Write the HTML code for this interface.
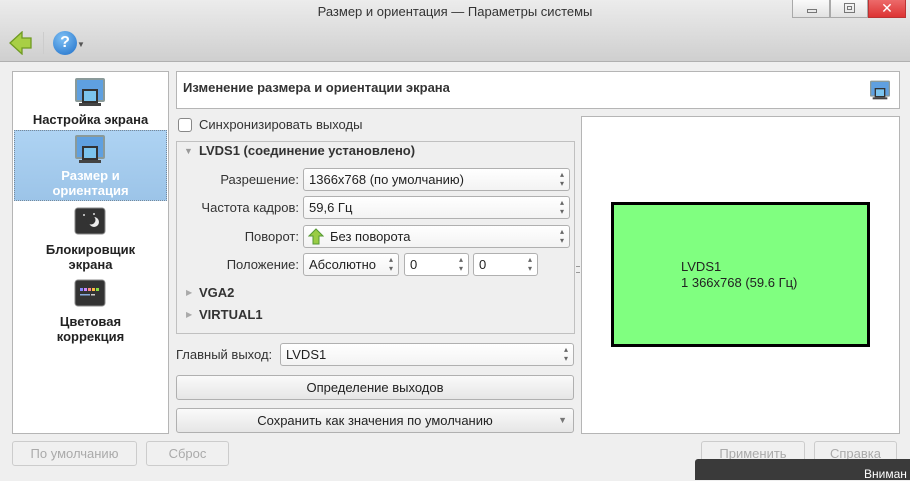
<!DOCTYPE html><html><head><meta charset="utf-8"><style>
*{box-sizing:border-box;margin:0;padding:0}
body{width:910px;height:480px;overflow:hidden;background:#efefef;font-family:"Liberation Sans","DejaVu Sans",sans-serif;font-size:13px;color:#222;position:relative}
.a{position:absolute}
.tb{left:0;top:0;width:910px;height:62px;background:linear-gradient(#ececec,#cfcfcf);border-bottom:1px solid #b0b0b0}
.wb{top:0;height:18px;border:1px solid #a9a9a9;border-top:none;background:linear-gradient(#fafafa,#e2e2e2)}
.box{background:#fff;border:1px solid #b5b5b5}
.combo{background:linear-gradient(#fff,#f3f3f3);border:1px solid #b0b0b0;border-radius:3px;height:23px;line-height:21px;padding-left:5px;font-size:13px}
.combo:after{content:"▴\A▾";white-space:pre;position:absolute;right:5px;top:1px;font-size:8px;line-height:9px;color:#666}
.btn{background:linear-gradient(#fafafa,#e6e6e6);border:1px solid #b0b0b0;border-radius:3px;text-align:center;height:25px;line-height:23px}
.dis{color:#aaa;border-color:#ccc;background:#f0f0f0}
.lbl{text-align:right;width:120px;color:#333}
.bold{font-weight:bold}
</style></head><body>
<div class="a tb"></div>
<div class="a" style="left:0;width:910px;top:4px;text-align:center;font-size:13px;color:#333">Размер и ориентация — Параметры системы</div>
<div class="a wb" style="left:792px;width:38px"><div class="a" style="left:14px;top:9px;width:10px;height:4px;border:1px solid #777"></div></div>
<div class="a wb" style="left:830px;width:38px"><div class="a" style="left:13px;top:3px;width:11px;height:10px;border:1px solid #777"></div><div class="a" style="left:16px;top:6px;width:5px;height:4px;border:1px solid #777"></div></div>
<div class="a wb" style="left:868px;width:38px;background:linear-gradient(#ec6a6a,#d33);border-color:#b33;color:#fff;text-align:center;font-weight:bold;font-size:14px;line-height:16px">✕</div>
<svg class="a" style="left:9px;top:31px" width="24" height="24"><path d="M1 12 L13 1 V7 H22 V17 H13 V23Z" fill="#a8cf45" stroke="#6f9a22" stroke-width="1.3"/></svg>
<div class="a" style="left:43px;top:32px;width:1px;height:22px;background:#ccc"></div>
<div class="a" style="left:53px;top:31px;width:24px;height:24px;border-radius:50%;background:radial-gradient(circle at 40% 30%,#7ec0f5,#1f6fc8);color:#fff;font-weight:bold;text-align:center;line-height:24px;font-size:16px">?</div>
<div class="a" style="left:77px;top:40px;font-size:8px;color:#555">▼</div>

<div class="a box" style="left:12px;top:71px;width:157px;height:363px"></div>
<div class="a" style="left:14px;top:130px;width:153px;height:71px;background:linear-gradient(#aed3f3,#9cc4e8);border:1px dotted #789"></div>
<svg class="a" width="0" height="0"><defs><g id="m"><rect x="1" y="1" width="30" height="24" fill="#8a9a9a" rx="2"/><rect x="3" y="3" width="26" height="20" fill="#5fa0e0"/><rect x="8" y="12" width="16" height="14" fill="#333"/><rect x="10" y="14" width="12" height="10" fill="#7bc4ee"/><rect x="5" y="26" width="22" height="3" fill="#444"/></g></defs></svg>
<svg class="a" style="left:74px;top:77px" width="32" height="30"><use href="#m"/></svg>
<div class="a bold" style="left:14px;width:153px;text-align:center;top:112px">Настройка экрана</div>
<svg class="a" style="left:74px;top:134px" width="32" height="30"><use href="#m"/></svg>
<div class="a bold" style="left:14px;width:153px;text-align:center;top:168px;color:#fff;line-height:15px">Размер и<br>ориентация</div>
<svg class="a" style="left:74px;top:207px" width="32" height="28"><rect x="1" y="1" width="30" height="26" rx="3" fill="#333" stroke="#888"/><circle cx="10" cy="8" r="1" fill="#ddd"/><circle cx="14" cy="14" r="1" fill="#ddd"/><circle cx="20" cy="7" r="1" fill="#ddd"/><circle cx="20" cy="15" r="5" fill="#eee"/><circle cx="17" cy="13" r="4.5" fill="#333"/></svg>
<div class="a bold" style="left:14px;width:153px;text-align:center;top:242px;line-height:15px">Блокировщик<br>экрана</div>
<svg class="a" style="left:74px;top:279px" width="32" height="28"><rect x="1" y="1" width="30" height="26" rx="3" fill="#333" stroke="#888"/><rect x="6" y="9" width="3" height="3" fill="#88f"/><rect x="10" y="9" width="3" height="3" fill="#c8f"/><rect x="14" y="9" width="3" height="3" fill="#f88"/><rect x="18" y="9" width="3" height="3" fill="#fb4"/><rect x="22" y="9" width="3" height="3" fill="#8d4"/><rect x="6" y="15" width="10" height="1.5" fill="#8ad"/><rect x="17" y="15" width="4" height="1.5" fill="#ccc"/></svg>
<div class="a bold" style="left:14px;width:153px;text-align:center;top:314px;line-height:15px">Цветовая<br>коррекция</div>

<div class="a box" style="left:176px;top:71px;width:724px;height:38px"></div>
<div class="a bold" style="left:183px;top:80px;color:#333">Изменение размера и ориентации экрана</div>
<svg class="a" style="left:869px;top:80px" width="22" height="20" viewBox="0 0 32 30"><use href="#m"/></svg>

<div class="a" style="left:178px;top:118px;width:14px;height:14px;border:1px solid #888;border-radius:3px;background:#fff"></div>
<div class="a" style="left:199px;top:117px;color:#333">Синхронизировать выходы</div>

<div class="a" style="left:176px;top:141px;width:399px;height:193px;border:1px solid #c0c0c0"></div>
<div class="a" style="left:184px;top:146px;font-size:9px;color:#999">▼</div>
<div class="a bold" style="left:199px;top:143px;color:#333">LVDS1 (соединение установлено)</div>
<div class="a lbl" style="left:179px;top:172px">Разрешение:</div>
<div class="a combo" style="left:303px;top:168px;width:267px">1366x768 (по умолчанию)</div>
<div class="a lbl" style="left:179px;top:200px">Частота кадров:</div>
<div class="a combo" style="left:303px;top:196px;width:267px">59,6 Гц</div>
<div class="a lbl" style="left:179px;top:229px">Поворот:</div>
<div class="a combo" style="left:303px;top:225px;width:267px;padding-left:26px">Без поворота</div>
<svg class="a" style="left:308px;top:228px" width="16" height="17"><path d="M8 1 L15 8 H11 V16 H5 V8 H1Z" fill="#9c4" stroke="#593" stroke-width="1"/></svg>
<div class="a lbl" style="left:179px;top:257px">Положение:</div>
<div class="a combo" style="left:303px;top:253px;width:96px">Абсолютно</div>
<div class="a combo" style="left:404px;top:253px;width:65px;background:#fff">0</div>
<div class="a combo" style="left:473px;top:253px;width:65px;background:#fff">0</div>
<div class="a" style="left:186px;top:288px;font-size:8px;color:#aaa">▶</div>
<div class="a bold" style="left:199px;top:285px;color:#333">VGA2</div>
<div class="a" style="left:186px;top:310px;font-size:8px;color:#aaa">▶</div>
<div class="a bold" style="left:199px;top:307px;color:#333">VIRTUAL1</div>
<div class="a" style="left:576px;top:266px;width:4px;height:7px;border-top:1px solid #999;border-bottom:1px solid #999"></div>

<div class="a" style="left:176px;top:347px;color:#333">Главный выход:</div>
<div class="a combo" style="left:280px;top:343px;width:294px">LVDS1</div>
<div class="a btn" style="left:176px;top:375px;width:398px">Определение выходов</div>
<div class="a btn" style="left:176px;top:408px;width:398px">Сохранить как значения по умолчанию<span class="a" style="right:6px;top:0;font-size:9px;color:#777">▼</span></div>

<div class="a box" style="left:581px;top:116px;width:319px;height:318px"></div>
<div class="a" style="left:611px;top:202px;width:259px;height:145px;background:#80ff80;border:3px solid #000"></div>
<div class="a" style="left:681px;top:259px;line-height:16px;font-size:13px">LVDS1<br>1 366x768 (59.6 Гц)</div>

<div class="a btn dis" style="left:12px;top:441px;width:125px">По умолчанию</div>
<div class="a btn dis" style="left:146px;top:441px;width:83px">Сброс</div>
<div class="a btn dis" style="left:701px;top:441px;width:104px">Применить</div>
<div class="a btn dis" style="left:814px;top:441px;width:83px">Справка</div>
<div class="a" style="left:695px;top:459px;width:215px;height:21px;background:#3a3a3a;border-radius:3px 0 0 0"></div>
<div class="a" style="left:864px;top:467px;color:#fff;font-size:12px">Вниман</div>
</body></html>
